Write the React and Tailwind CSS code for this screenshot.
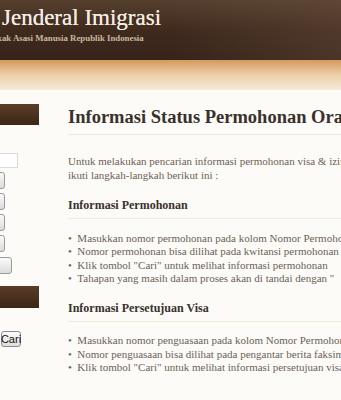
export default function App() {
  const serif = { fontFamily: '"Liberation Serif", serif' };
  const Btn = ({ w = 'w-[5px]', h = 'h-[17px]' }) => (
    <div className={`${w} ${h} relative overflow-hidden`}>
      <div className={`absolute right-0 top-0 w-[40px] ${h} rounded-[3px] border border-[#9a9a9a] bg-gradient-to-b from-[#fafafa] to-[#dcdcdc]`} />
    </div>
  );
  return (
    <div className="w-[341px] h-[400px] overflow-hidden bg-[#fcfbf8]" style={serif}>
      {/* header */}
      <div className="h-[60px] bg-gradient-to-b from-[#55402f] via-[#3f2a1d] to-[#36231a] relative overflow-hidden">
        <div className="absolute inset-0 bg-gradient-to-r from-transparent via-transparent to-[#6a5040]/40" />
        <div className="relative pl-[2px] pt-[4px] text-[23px] leading-[28px] text-[#f3ece4] whitespace-nowrap [text-shadow:0_0_0.5px_#f3ece4]">
          Jenderal Imigrasi
        </div>
        <div className="relative ml-[-3px] mt-[1px] text-[8.8px] leading-[10px] text-[#c9b79f] whitespace-nowrap font-bold">
          kak Asasi Manusia Republik Indonesia
        </div>
      </div>
      <div className="h-[30px] bg-gradient-to-b from-[#d49a5c] via-[#ebcfa8] to-[#f5ead9]" />

      <div className="flex">
        {/* sidebar */}
        <div className="w-[68px] shrink-0 flex flex-col">
          <div className="mt-[14px] w-[39px] h-[21px] bg-gradient-to-b from-[#5b3d28] to-[#3c2616]" />
          <div className="mt-[28px] w-[18px] h-[15px] border border-[#dddad4] border-l-0 bg-white" />
          <div className="mt-[4px] flex flex-col gap-[4px]">
            <Btn />
            <Btn />
            <Btn />
            <Btn />
          </div>
          <div className="mt-[5px]"><Btn w="w-[12px]" /></div>
          <div className="mt-[12px] w-[39px] h-[22px] bg-gradient-to-b from-[#5b3d28] to-[#3c2616]" />
          <div className="mt-[23px] ml-[1px] w-[20px] h-[16px] rounded-[3px] border border-[#8a8a8a] bg-gradient-to-b from-[#fbfbfb] to-[#dedede] flex items-center justify-center text-[11px] text-[#111] font-['Liberation_Sans',sans-serif]">
            Cari
          </div>
        </div>

        {/* main */}
        <div className="flex-1 overflow-hidden whitespace-nowrap text-[#6d5f56]">
          <div className="mt-[15px] text-[18.5px] leading-[24px] font-bold text-[#3a302c]">
            Informasi Status Permohonan Orang Asing
          </div>
          <div className="mt-[5px] h-px bg-[#efe6d8]" />
          <div className="mt-[19px] text-[11px] leading-[14px]">
            <div>Untuk melakukan pencarian informasi permohonan visa &amp; izin tinggal,</div>
            <div>ikuti langkah-langkah berikut ini :</div>
          </div>
          <div className="mt-[16px] text-[12px] leading-[14px] font-bold text-[#3a302c]">Informasi Permohonan</div>
          <div className="mt-[6px] h-px bg-[#f1e8da]" />
          <ul className="mt-[13px] text-[11px] leading-[13.3px]">
            <li>• &nbsp;Masukkan nomor permohonan pada kolom Nomor Permohonan</li>
            <li>• &nbsp;Nomor permohonan bisa dilihat pada kwitansi permohonan</li>
            <li>• &nbsp;Klik tombol "Cari" untuk melihat informasi permohonan</li>
            <li>• &nbsp;Tahapan yang masih dalam proses akan di tandai dengan "</li>
          </ul>
          <div className="mt-[16px] text-[12px] leading-[14px] font-bold text-[#3a302c]">Informasi Persetujuan Visa</div>
          <div className="mt-[6px] h-px bg-[#f1e8da]" />
          <ul className="mt-[12px] text-[11px] leading-[13.5px]">
            <li>• &nbsp;Masukkan nomor penguasaan pada kolom Nomor Permohonan</li>
            <li>• &nbsp;Nomor penguasaan bisa dilihat pada pengantar berita faksimili</li>
            <li>• &nbsp;Klik tombol "Cari" untuk melihat informasi persetujuan visa</li>
          </ul>
        </div>
      </div>
    </div>
  );
}
